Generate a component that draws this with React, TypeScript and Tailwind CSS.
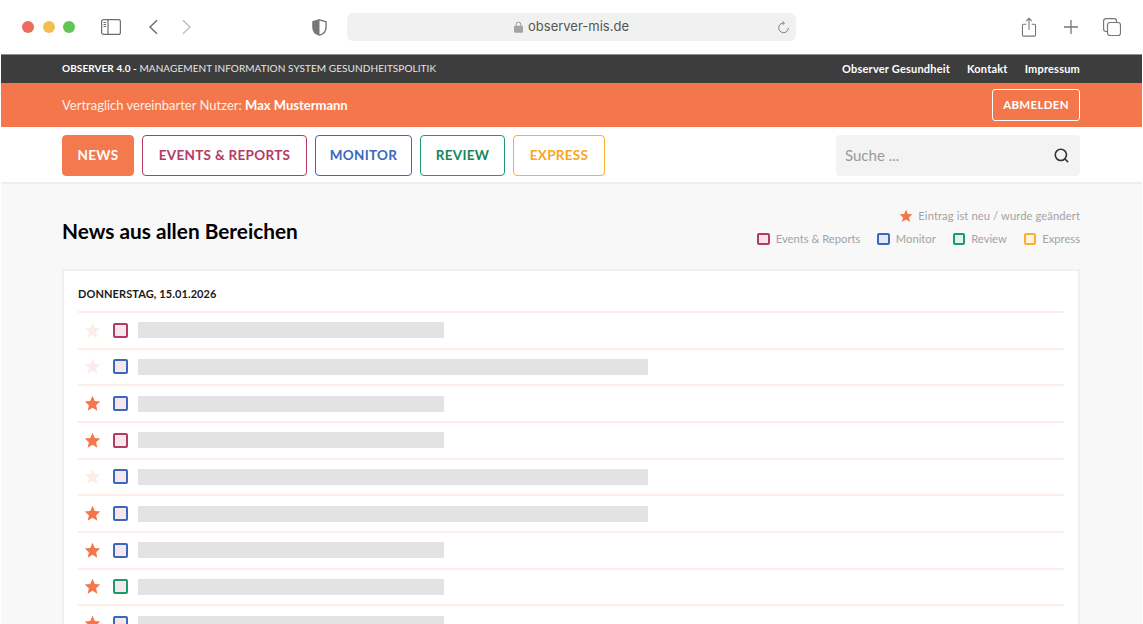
import React from "react";

const Star = ({ className }: { className: string }) => (
  <svg viewBox="0 0 24 24" className={className} fill="currentColor">
    <path d="M12 1.2l3.2 7.2 7.8.8-5.9 5.2 1.7 7.7L12 18.1l-6.8 4 1.7-7.7L1 9.2l7.8-.8z" />
  </svg>
);

const rows: [boolean, string, number][] = [
  [false, "border-[#b23a63]", 306],
  [false, "border-[#3a68bb]", 510],
  [true, "border-[#3a68bb]", 306],
  [true, "border-[#b23a63]", 306],
  [false, "border-[#3a68bb]", 510],
  [true, "border-[#3a68bb]", 510],
  [true, "border-[#3a68bb]", 306],
  [true, "border-[#1d9a6c]", 306],
  [true, "border-[#3a68bb]", 306],
];

const legend = [
  ["Events & Reports", "border-[#b23a63] bg-[#f6e4ea]"],
  ["Monitor", "border-[#3a68bb] bg-[#e2e9f5]"],
  ["Review", "border-[#1d9a6c] bg-[#e2f2ec]"],
  ["Express", "border-[#fbb02d] bg-[#fef3de]"],
];

const tabs = [
  ["NEWS", "w-[72px] bg-[#f4794e] border-[#f4794e] text-white"],
  ["EVENTS & REPORTS", "w-[165px] border-[#b23a63] text-[#b23a63]"],
  ["MONITOR", "w-[97px] border-[#3a68bb] text-[#3a68bb]"],
  ["REVIEW", "w-[85px] border-[#1d9a6c] text-[#12885c]"],
  ["EXPRESS", "w-[92px] border-[#fbb02d] text-[#f9a61a]"],
];

export default function App() {
  return (
    <div className="h-[624px] w-[1143px] overflow-hidden bg-white font-['Lato',sans-serif]">
      {/* Browser toolbar */}
      <div className="flex h-[54px] items-center">
        <div className="ml-[22px] flex gap-[8.5px]">
          <span className="h-[12px] w-[12px] rounded-full bg-[#ec6a5e]" />
          <span className="h-[12px] w-[12px] rounded-full bg-[#f4bf4f]" />
          <span className="h-[12px] w-[12px] rounded-full bg-[#61c554]" />
        </div>
        <svg viewBox="0 0 20 16" className="ml-[26px] h-[16px] w-[20px]" fill="none" stroke="#6e6e6e" strokeWidth="1.2">
          <rect x="0.6" y="0.6" width="18.8" height="14.8" rx="2" />
          <path d="M7 .6v14.8M2.5 3.5h2.5M2.5 5.5h2.5M2.5 7.5h2.5" />
        </svg>
        <svg viewBox="0 0 12 18" className="ml-[27px] h-[16px] w-[11px]" fill="none" stroke="#666" strokeWidth="1.5">
          <path d="M10 1.5L2 9l8 7.5" />
        </svg>
        <svg viewBox="0 0 12 18" className="ml-[22px] h-[16px] w-[11px]" fill="none" stroke="#bbb" strokeWidth="1.5">
          <path d="M2 1.5L10 9l-8 7.5" />
        </svg>
        <svg viewBox="0 0 16 18" className="ml-[120px] h-[17px] w-[15px]">
          <path d="M8 .8L15 3v6c0 4-3 7-7 8.2C4 16 1 13 1 9V3z" fill="none" stroke="#777" strokeWidth="1.5" />
          <path d="M8 .8L1 3v6c0 4 3 7 7 8.2z" fill="#777" />
        </svg>
        <div className="relative ml-[20px] flex h-[28px] w-[449px] items-center justify-center rounded-[6px] bg-[#f1f1f1] pb-[1px] font-['Inter',sans-serif] text-[13px] text-[#555]">
          <svg viewBox="0 0 10 13" className="mr-[5px] h-[12px] w-[9px]">
            <path d="M2.5 5.5V3.5a2.5 2.5 0 015 0v2" fill="none" stroke="#9a9a9a" strokeWidth="1.1" />
            <rect y="5" width="10" height="8" rx="1.2" fill="#a3a3a3" />
          </svg>
          observer-mis.de
          <svg viewBox="0 0 14 14" className="absolute right-[6px] top-[8px] h-[13px] w-[13px]" fill="none" stroke="#777" strokeWidth="1">
            <path d="M7.5 2.2A5.2 5.2 0 1 0 12.2 7.5M6 .3l2 1.900L6 4.200" />
          </svg>
        </div>
        <svg viewBox="0 0 16 22" className="ml-[225px] h-[20px] w-[16px]" fill="none" stroke="#777" strokeWidth="1.2">
          <path d="M5 8H2a1.2 1.2 0 00-1.2 1.2v10.600A1.200 1.200 0 002 21h12a1.200 1.200 0 001.200-1.200V9.200A1.200 1.200 0 0014 8h-3M8 14V1.500M4.800 4.500L8 1.300l3.200 3.200" />
        </svg>
        <svg viewBox="0 0 14 14" className="ml-[27px] h-[14px] w-[14px]" fill="none" stroke="#777" strokeWidth="1.3">
          <path d="M7 0v14M0 7h14" />
        </svg>
        <svg viewBox="0 0 18 18" className="ml-[25px] h-[18px] w-[18px]" fill="none" stroke="#777" strokeWidth="1.2">
          <rect x="4.5" y="4.5" width="13" height="13" rx="2.5" />
          <path d="M4.5 13.500H3A2.500 2.500 0 01.600 11V3A2.500 2.500 0 013 .600h8a2.500 2.500 0 012.500 2.500v1.400" />
        </svg>
      </div>

      <div className="mx-[1px] border-t border-[#8f8f8f]">
        {/* Top dark bar */}
        <div className="flex h-[28px] items-center justify-between bg-[#3d3d3d] pl-[61px] pr-[62px] text-[10px] text-white">
          <div className="mb-[2px] tracking-[0.08px]">
            <span className="font-bold">OBSERVER 4.0 - </span>
            <span className="text-[#e6e6e6]">MANAGEMENT INFORMATION SYSTEM GESUNDHEITSPOLITIK</span>
          </div>
          <div className="flex gap-[17px] text-[11px] font-bold tracking-[0.2px]">
            <span>Observer Gesundheit</span>
            <span>Kontakt</span>
            <span>Impressum</span>
          </div>
        </div>

        {/* Orange user bar */}
        <div className="flex h-[44px] items-center justify-between bg-[#f3774b] pl-[61px] pr-[62px] text-[13px] text-white">
          <div className="mt-[2px] text-[#fdeee8]">
            Vertraglich vereinbarter Nutzer: <span className="font-bold text-white">Max Mustermann</span>
          </div>
          <div className="flex h-[32px] w-[88px] items-center justify-center rounded-[3px] border border-white text-[11.5px] font-bold tracking-[0.3px]">
            ABMELDEN
          </div>
        </div>

        {/* Nav */}
        <div className="flex h-[57px] items-start justify-between border-b-2 border-[#eeeeee] pl-[61px] pr-[62px] pt-[8px]">
          <div className="flex gap-[8px]">
            {tabs.map(([label, cls]) => (
              <div
                key={label}
                className={`flex h-[41px] items-center justify-center rounded-[4px] border text-[13.5px] font-bold tracking-[0.3px] ${cls}`}
              >
                {label}
              </div>
            ))}
          </div>
          <div className="flex h-[41px] w-[244px] items-center justify-between rounded-[4px] bg-[#f3f3f3] pl-[9px] pr-[11px]">
            <span className="text-[15px] text-[#9a9a9a]">Suche ...</span>
            <svg viewBox="0 0 16 16" className="h-[15px] w-[15px]" fill="none" stroke="#333" strokeWidth="1.7">
              <circle cx="7.3" cy="7.3" r="6" />
              <path d="M11.5 11.5l3.5 3.5" />
            </svg>
          </div>
        </div>

        {/* Main */}
        <div className="h-[500px] bg-[#f8f8f8] pl-[61px] pr-[62px]">
          <div className="flex h-[85px] items-start justify-between pt-[25px]">
            <h1 className="mt-[9px] text-[20.8px] font-bold leading-[26px] text-black">News aus allen Bereichen</h1>
            <div className="flex flex-col items-end text-[11.2px] leading-[14px] text-[#a3a3a3]">
              <div className="flex h-[14px] items-center gap-[5px]">
                <Star className="h-[14px] w-[14px] text-[#f4764a]" />
                <span className="tracking-[0.1px]">Eintrag ist neu / wurde geändert</span>
              </div>
              <div className="mt-[9px] flex gap-[17px]">
                {legend.map(([label, cls]) => (
                  <div key={label} className="flex items-center gap-[6px]">
                    <span className={`h-[12.5px] w-[12.5px] rounded-[2px] border-2 ${cls}`} />
                    <span>{label}</span>
                  </div>
                ))}
              </div>
            </div>
          </div>

          <div className="border-2 border-[#f0f0f0] bg-white px-[14px]">
            <div className="flex h-[40px] items-center pt-[7px] text-[11px] font-bold tracking-[0.1px] text-[#1a1a1a]">
              DONNERSTAG, 15.01.2026
            </div>
            {rows.map(([isNew, border, width], i) => (
              <div key={i} className="flex h-[36.67px] items-center border-t-2 border-[#fdeee8] pl-[6px]">
                <Star className={`h-[17px] w-[17px] ${isNew ? "text-[#f4764a]" : "text-[#fbeeea]"}`} />
                <span className={`ml-[12px] h-[15px] w-[15px] rounded-[2px] border-2 bg-[#f5e7ed] ${border}`} />
                <div className="ml-[10px] h-[16px] bg-[#e3e3e3]" style={{ width }} />
              </div>
            ))}
          </div>
        </div>
      </div>
    </div>
  );
}
